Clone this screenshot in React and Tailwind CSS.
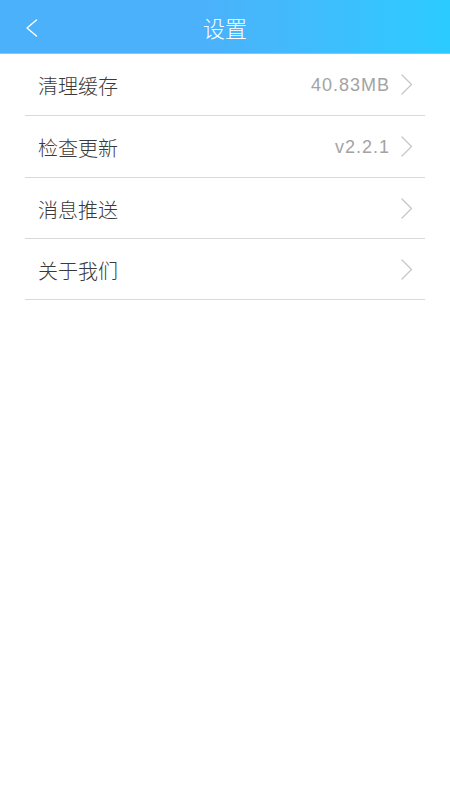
import React from "react";

const rows = [
  { label: "清理缓存", value: "40.83MB", h: "h-[62px]" },
  { label: "检查更新", value: "v2.2.1", h: "h-[62px]" },
  { label: "消息推送", value: "", h: "h-[61px]" },
  { label: "关于我们", value: "", h: "h-[61px]" },
];

function Chevron() {
  return (
    <svg width="12" height="21" viewBox="0 0 12 21" fill="none" className="shrink-0">
      <path d="M1 1 L10.5 10.5 L1 20" stroke="#c4c4c4" strokeWidth="1.2" strokeLinecap="round" strokeLinejoin="round" />
    </svg>
  );
}

export default function App() {
  return (
    <div className="w-[450px] h-[800px] bg-white" style={{ fontFamily: '"Noto Sans CJK SC", "Noto Sans", sans-serif' }}>
      <div className="h-[54px] bg-gradient-to-r from-[#4bb1fa] from-45% to-[#2acbff] border-b border-[#7cc9ff] flex items-center relative">
        <div className="absolute left-[25px] top-[19px]">
          <svg width="13" height="18" viewBox="0 0 13 18" fill="none">
            <path d="M11.5 1 L2 9 L11.5 17" stroke="#ffffff" strokeWidth="1.4" strokeLinecap="round" strokeLinejoin="round" />
          </svg>
        </div>
        <div className="flex-1 text-center text-white text-[22px] leading-none font-light">设置</div>
      </div>
      <div className="mx-[25px]">
        {rows.map((r) => (
          <div key={r.label} className={`${r.h} border-b border-[#d9d9d9] flex items-center pl-[13px] pr-[12px]`}>
            <div className="flex-1 text-[20px] text-[#3a3a3a] leading-none pt-[3px] font-light">{r.label}</div>
            {r.value && (
              <div
                className="text-[18px] text-[#a3a3a3] tracking-[1px] mr-[11px] leading-none"
                style={{ fontFamily: '"Liberation Sans", Arial, sans-serif' }}
              >
                {r.value}
              </div>
            )}
            <Chevron />
          </div>
        ))}
      </div>
    </div>
  );
}
